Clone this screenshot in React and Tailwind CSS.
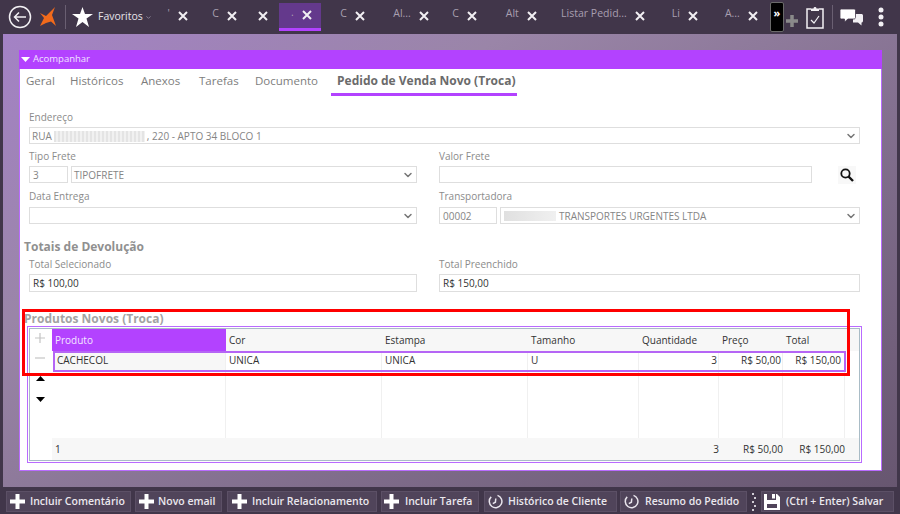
import { ChevronDown } from 'lucide-react'

const font = "font-['Open_Sans','Noto_Sans',sans-serif]"

const tabs = [
  { w: 'w-[40px]', label: "'" },
  { w: 'w-[49px]', label: 'C' },
  { w: 'w-[31px]', label: '' },
  { w: 'w-[42px] ml-[2px]', label: '.', active: true },
  { w: 'w-[53px]', label: 'C' },
  { w: 'w-[64px]', label: 'Al...' },
  { w: 'w-[48px]', label: 'C' },
  { w: 'w-[60px]', label: 'Alt' },
  { w: 'w-[108px]', label: 'Listar Pedid...' },
  { w: 'w-[53px]', label: 'Li' },
  { w: 'w-[60px]', label: 'A...' },
]

const sections = [
  { w: 'w-[44px]', label: 'Geral' },
  { w: 'w-[71px]', label: 'Históricos' },
  { w: 'w-[58px]', label: 'Anexos' },
  { w: 'w-[56px]', label: 'Tarefas' },
  { w: 'w-[82px]', label: 'Documento' },
]

const columns = 'grid grid-cols-[174px_156px_146px_111px_80px_64px_62px_15px]'

function CloseIcon() {
  return (
    <svg width="10" height="10" viewBox="0 0 10 10" className="shrink-0 mt-[2px]">
      <path d="M1 1L9 9M9 1L1 9" stroke="#f1eff3" strokeWidth="2" />
    </svg>
  )
}

function PlusIcon() {
  return (
    <svg width="15" height="15" viewBox="0 0 15 15" className="shrink-0">
      <path d="M7.500 0V15M0 7.500H15" stroke="#fff" strokeWidth="4" />
    </svg>
  )
}

function ClockIcon() {
  return (
    <svg width="15" height="15" viewBox="0 0 15 15" className="shrink-0">
      <path d="M9.500 1.400A6.300 6.300 0 1 1 3.200 2.900" fill="none" stroke="#e8e4ec" strokeWidth="1.500" />
      <path d="M7.800 4.500L7.400 8.200L4.800 9.600" fill="none" stroke="#e8e4ec" strokeWidth="1.500" />
    </svg>
  )
}

function SaveIcon() {
  return (
    <svg width="16" height="16" viewBox="0 0 16 16" className="shrink-0">
      <path d="M0 0H3V6H12V0H13L16 3V16H0Z" fill="#fff" />
      <path d="M8 0H11V4.500H8Z" fill="#fff" />
      <path d="M3 10H13V14H3Z" fill="#50445a" />
    </svg>
  )
}

function ActionButton({ icon, label, className }) {
  return (
    <button className={`h-[21px] flex items-center bg-[#50445a] border border-[#5c5066] text-[10.5px] font-semibold text-[#ebe8ee] whitespace-nowrap ${className}`}>
      {icon}
      <span>{label}</span>
    </button>
  )
}

function Field({ label, children, boxClass = 'h-[22px] pt-[5px]' }) {
  return (
    <div>
      <div className={`${boxClass} text-[10px] leading-[14px] text-[#8b8b8b]`}>{label}</div>
      {children}
    </div>
  )
}

function Input({ value, className = '', strong }) {
  return (
    <div className={`h-[17px] border border-[#dedede] bg-white px-[3px] pt-px flex items-center text-[10px] whitespace-nowrap ${strong ? 'text-[#333]' : 'text-[#858585]'} ${className}`}>
      {value}
    </div>
  )
}

function Select({ children, className = '' }) {
  return (
    <div className={`h-[17px] border border-[#dedede] bg-white pl-[2px] pr-[2px] flex items-center text-[10px] text-[#858585] whitespace-nowrap ${className}`}>
      <div className="flex-1 flex items-center pt-px">{children}</div>
      <ChevronDown size={12} strokeWidth={3} className="text-[#777]" />
    </div>
  )
}

export default function App() {
  return (
    <div className={`relative w-[900px] h-[514px] overflow-hidden flex flex-col bg-[#41364a] ${font}`}>
      <header className="h-[34px] flex items-center shrink-0">
        <svg width="24" height="24" viewBox="0 0 24 24" className="ml-[8px] shrink-0">
          <circle cx="12" cy="12" r="10.500" fill="none" stroke="#f2f0f4" strokeWidth="1.500" />
          <path d="M18 12H6.500M11 7.500L6.500 12L11 16.500" fill="none" stroke="#f2f0f4" strokeWidth="1.500" />
        </svg>
        <svg width="18" height="20" viewBox="0 0 18 20" className="ml-[7px] shrink-0">
          <path d="M16 0L13 8L17 19L12 14.500L7 16L1 19L5 11L1 6L7 9Z" fill="#f26a1b" />
        </svg>
        <div className="ml-[8px] w-px h-[24px] bg-[#6a5f72] shrink-0" />
        <svg width="21" height="20" viewBox="0 0 21 20" className="ml-[6px] shrink-0">
          <path d="M10.500 0L13 7H21L14.500 11.500L17 20L10.500 15L4 20L6.500 11.500L0 7H8Z" fill="#fff" />
        </svg>
        <span className="ml-[5px] text-[10.5px] text-[#e6e3e9]">Favoritos</span>
        <ChevronDown size={7} strokeWidth={3} className="ml-[2px] text-[#8f8598]" />
        <div className="ml-[1px] w-[4px] shrink-0" />
        <nav className="flex h-[28px] -mt-[1px] shrink-0">
          {tabs.map((tab, i) => (
            <div
              key={i}
              className={`${tab.w} flex items-center justify-end gap-[8px] pr-[9px] pb-[3px] text-[10.5px] text-[#a89fb0] whitespace-nowrap ${tab.active ? 'bg-[#64398c] border-b-[3px] border-[#b342ff]' : ''}`}
            >
              <span className="-mt-[2px]">{tab.label}</span>
              <CloseIcon />
            </div>
          ))}
        </nav>
        <div className="ml-[3px] w-[14px] h-[30px] bg-black border border-[#6a6a6a] rounded-[2px] flex justify-center pt-[3px] text-[11px] leading-[14px] font-bold text-white shrink-0">»</div>
        <svg width="14" height="14" viewBox="0 0 14 14" className="ml-[1px] mt-[8px] shrink-0">
          <path d="M7 1V13M1 7H13" stroke="#8a8a8a" strokeWidth="3.500" />
        </svg>
        <svg width="18" height="23" viewBox="0 0 18 23" className="ml-[7px] shrink-0">
          <path d="M5 3H1V22H17V3H13" fill="none" stroke="#f2f0f4" strokeWidth="1.500" />
          <path d="M5 5V2.500H7.500C7.500 0.500 10.500 0.500 10.500 2.500H13V5Z" fill="#f2f0f4" />
          <path d="M5 14L8 17L13 10" fill="none" stroke="#f2f0f4" strokeWidth="1.200" />
        </svg>
        <div className="ml-[8px] w-px h-[24px] bg-[#6a5f72] shrink-0" />
        <svg width="23" height="17" viewBox="0 0 23 17" className="ml-[7px] shrink-0">
          <path d="M13 5H21.500C22.300 5 23 5.700 23 6.500V12C23 12.800 22.300 13.500 21.500 13.500V16.500L18 13.500H13Z" fill="#f2f0f4" />
          <path d="M1.500 0H14C14.800 0 15.500 0.700 15.500 1.500V8.500C15.500 9.300 14.800 10 14 10H8L4.500 13V10H1.500C0.700 10 0 9.300 0 8.500V1.500C0 0.700 0.700 0 1.500 0Z" fill="#fff" stroke="#41364a" strokeWidth="0.800" />
        </svg>
        <svg width="6" height="20" viewBox="0 0 6 20" className="ml-[15px] shrink-0">
          <circle cx="3" cy="3" r="2.500" fill="#f2f0f4" />
          <circle cx="3" cy="10" r="2.500" fill="#f2f0f4" />
          <circle cx="3" cy="17" r="2.500" fill="#f2f0f4" />
        </svg>
      </header>

      <main className="flex-1 mx-[3px] pt-[16px] pl-[16px] pr-[15px] bg-[linear-gradient(150deg,#a482c6,#9a85a8_30%,#675670)]">
        <section className="h-[421px] flex flex-col">
          <div className="h-[19px] bg-[#b342ff] flex items-center pl-[1px] text-[9.5px] text-[#f0e2ff]">
            <svg width="9" height="5" viewBox="0 0 9 5" className="mx-[1px] shrink-0">
              <path d="M0 0H9L4.500 5Z" fill="#fff" />
            </svg>
            <span className="ml-[2px]">Acompanhar</span>
          </div>

          <div className="flex-1 bg-white border border-t-0 border-[#b96bff]">
            <div className="flex h-[27px]">
              {sections.map((s) => (
                <div key={s.label} className={`${s.w} pl-[6px] pt-[3px] text-[11.5px] leading-[18px] text-[#7d7d7d]`}>{s.label}</div>
              ))}
              <div className="w-[186px] px-[6px] pt-[3px] text-[12px] leading-[18px] font-bold text-[#6b6b6b] whitespace-nowrap border-b-[3px] border-[#b342ff]">Pedido de Venda Novo (Troca)</div>
            </div>

            <div className="pl-[9px] pr-[21px] pt-[9px]">
              <Field label="Endereço">
                <Select>
                  <span>RUA</span>
                  <span className="w-[91px] h-[11px] mx-[2px] bg-[repeating-linear-gradient(90deg,#e4e4e4_0px,#e4e4e4_2px,#f1f1f1_2px,#f1f1f1_4px)]" />
                  <span>, 220 - APTO 34 BLOCO 1</span>
                </Select>
              </Field>

              <div className="grid grid-cols-[388px_421px] gap-x-[22px]">
                <Field label="Tipo Frete">
                  <div className="flex gap-[3px]">
                    <Input value="3" className="w-[39px]" />
                    <Select className="flex-1">TIPOFRETE</Select>
                  </div>
                </Field>
                <Field label="Valor Frete">
                  <div className="flex">
                    <Input value="" className="w-[373px]" />
                    <div className="ml-[26px] w-[18px] h-[18px] bg-[#f8f8f8] flex items-center justify-center">
                      <svg width="14" height="14" viewBox="0 0 14 14">
                        <circle cx="5.500" cy="5.500" r="4.200" fill="none" stroke="#111" strokeWidth="1.800" />
                        <path d="M8.500 8.500L13 13" stroke="#111" strokeWidth="2.400" />
                      </svg>
                    </div>
                  </div>
                </Field>
                <Field label="Data Entrega" boxClass="h-[23px] pt-[5px]">
                  <Select />
                </Field>
                <Field label="Transportadora" boxClass="h-[23px] pt-[5px]">
                  <div className="flex gap-[3px]">
                    <Input value="00002" className="w-[58px]" />
                    <Select className="flex-1">
                      <span className="w-[52px] h-[10px] ml-[1px] mr-[3px] bg-[linear-gradient(90deg,#e0e0e0,#f0f0f0)]" />
                      TRANSPORTES URGENTES LTDA
                    </Select>
                  </div>
                </Field>
              </div>

              <h3 className="mt-[13px] -ml-[5px] h-[20px] text-[12px] leading-[20px] font-bold text-[#909090]">Totais de Devolução</h3>

              <div className="grid grid-cols-[388px_421px] gap-x-[22px]">
                <Field label="Total Selecionado" boxClass="h-[17px]">
                  <Input value="R$ 100,00" className="h-[18px]" strong />
                </Field>
                <Field label="Total Preenchido" boxClass="h-[17px]">
                  <Input value="R$ 150,00" className="h-[18px]" strong />
                </Field>
              </div>

              <h3 className="mt-[20px] -ml-[5px] h-[14px] text-[12px] leading-[14px] font-bold text-[#a3a3a3] whitespace-nowrap">Produtos Novos (Troca)</h3>
            </div>

            <div className="ml-[7px] w-[835px] h-[137px] border border-[#b96bff] p-px">
              <div className="h-full border border-[#a9bcc6] flex">
                <div className="w-[22px] shrink-0 flex flex-col items-center pt-[3px] pr-[2px] text-[#c4c4c4]">
                  <svg width="10" height="10" viewBox="0 0 10 10" className="mt-[1px]"><path d="M5 0V10M0 5H10" stroke="#c4c4c4" strokeWidth="1.200" /></svg>
                  <svg width="10" height="10" viewBox="0 0 10 10" className="mt-[10px]"><path d="M0 5H10" stroke="#c4c4c4" strokeWidth="1.200" /></svg>
                  <svg width="9" height="5" viewBox="0 0 9 5" className="mt-[13px]"><path d="M0 5H9L4.500 0Z" fill="#000" /></svg>
                  <svg width="9" height="5" viewBox="0 0 9 5" className="mt-[16px]"><path d="M0 0H9L4.500 5Z" fill="#000" /></svg>
                </div>
                <div className="flex-1 flex flex-col text-[10px] text-[#333] min-w-0">
                  <div className={`${columns} h-[22px] pb-px bg-[#f7f7f7] items-center`}>
                    <div className="h-[22px] bg-[#b342ff] text-[#f3e6ff] pl-[3px] flex items-center">Produto</div>
                    <div className="pl-[3px]">Cor</div>
                    <div className="pl-[3px]">Estampa</div>
                    <div className="pl-[3px]">Tamanho</div>
                    <div className="pl-[3px]">Quantidade</div>
                    <div className="pl-[3px]">Preço</div>
                    <div className="pl-[3px]">Total</div>
                    <div />
                  </div>
                  <div className="w-[793px] h-[21px] ml-[1px] border-2 border-[#b565f5] grid grid-cols-[171px_156px_146px_111px_80px_64px_61px] font-medium">
                    <div className="bg-[#f7f7f7] rounded-tl-[4px] pl-[2px] border-r border-[#f0f0f0] leading-[15px]">CACHECOL</div>
                    <div className="pl-[3px] border-r border-[#f0f0f0] leading-[15px]">UNICA</div>
                    <div className="pl-[3px] border-r border-[#f0f0f0] leading-[15px]">UNICA</div>
                    <div className="pl-[3px] border-r border-[#f0f0f0] leading-[15px]">U</div>
                    <div className="pr-[1px] text-right border-r border-[#f0f0f0] leading-[15px]">3</div>
                    <div className="pr-[1px] text-right border-r border-[#f0f0f0] leading-[15px]">R$ 50,00</div>
                    <div className="pr-[3px] text-right leading-[15px]">R$ 150,00</div>
                  </div>
                  <div className={`${columns} flex-1`}>
                    {[0, 1, 2, 3, 4, 5, 6].map((i) => (
                      <div key={i} className="border-r border-[#f0f0f0]" />
                    ))}
                  </div>
                  <div className={`${columns} h-[22px] bg-[#f7f7f7] items-center font-medium`}>
                    <div className="pl-[3px]">1</div>
                    <div />
                    <div />
                    <div />
                    <div className="text-right">3</div>
                    <div className="text-right">R$ 50,00</div>
                    <div className="text-right whitespace-nowrap">R$ 150,00</div>
                    <div />
                  </div>
                </div>
              </div>
            </div>
          </div>
        </section>
      </main>

      <footer className="h-[27px] shrink-0 flex items-center pl-[6px] pt-[2px]">
        <ActionButton icon={<PlusIcon />} label="Incluir Comentário" className="w-[125px] pl-[3px] gap-[5px] mr-[4px]" />
        <ActionButton icon={<PlusIcon />} label="Novo email" className="w-[87px] pl-[3px] gap-[4px] mr-[5px]" />
        <ActionButton icon={<PlusIcon />} label="Incluir Relacionamento" className="w-[150px] pl-[4px] gap-[5px] mr-[4px]" />
        <ActionButton icon={<PlusIcon />} label="Incluir Tarefa" className="w-[98px] pl-[2px] gap-[6px] mr-[5px]" />
        <ActionButton icon={<ClockIcon />} label="Histórico de Cliente" className="w-[133px] pl-[3px] gap-[5px] mr-[3px]" />
        <ActionButton icon={<ClockIcon />} label="Resumo do Pedido" className="w-[127px] pl-[3px] gap-[6px]" />
        <div className="w-[14px] h-[21px] flex flex-col items-center justify-center gap-[2px] shrink-0">
          {[0, 1, 2, 3, 4].map((i) => (
            <div key={i} className={`w-[2px] h-[2px] bg-[#d0ccd4] ${i % 2 ? 'translate-x-[1px]' : '-translate-x-[1px]'}`} />
          ))}
        </div>
        <ActionButton icon={<SaveIcon />} label="(Ctrl + Enter) Salvar" className="w-[133px] pl-[2px] gap-[6px]" />
      </footer>

      <div className="absolute left-[22px] top-[309px] w-[828px] h-[67px] border-[3px] border-[#ff0000]" />
    </div>
  )
}
